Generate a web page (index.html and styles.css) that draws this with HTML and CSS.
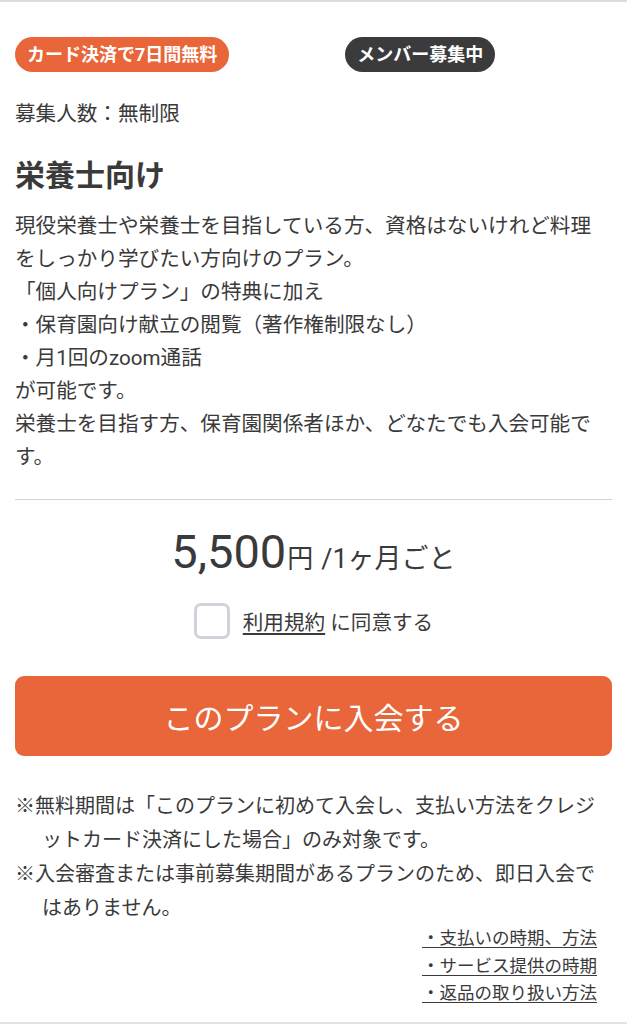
FILE: index.html
```html
<!DOCTYPE html>
<html lang="ja">
<head>
    <meta charset="UTF-8">
    <meta name="viewport" content="width=device-width, initial-scale=1.0">
    <title>栄養士向けプラン</title>
    <link rel="stylesheet" href="styles.css">
</head>
<body>

    <div class="plan">
        <div class="badges">
            <span class="badge badge-free">カード決済で7日間無料</span>
            <span class="badge badge-open">メンバー募集中</span>
        </div>

        <p class="limit">募集人数：無制限</p>

        <h2 class="plan-title">栄養士向け</h2>

        <p class="desc">現役栄養士や栄養士を目指している方、資格はないけれど料理をしっかり学びたい方向けのプラン。<br>「個人向けプラン」の特典に加え<br>・保育園向け献立の閲覧（著作権制限なし）<br>・月1回のzoom通話<br>が可能です。<br>栄養士を目指す方、保育園関係者ほか、どなたでも入会可能です。</p>

        <hr class="divider">

        <div class="price">
            <span class="amount">5,500</span><span class="yen">円</span><span class="per">/1ヶ月ごと</span>
        </div>

        <label class="agree">
            <input type="checkbox" class="check">
            <span class="box"></span>
            <span><a href="#" class="terms">利用規約</a> に同意する</span>
        </label>

        <button class="join-btn">このプランに入会する</button>

        <ul class="notes">
            <li>※無料期間は「このプランに初めて入会し、支払い方法をクレジットカード決済にした場合」のみ対象です。</li>
            <li>※入会審査または事前募集期間があるプランのため、即日入会ではありません。</li>
        </ul>

        <div class="links">
            <a href="#">・支払いの時期、方法</a>
            <a href="#">・サービス提供の時期</a>
            <a href="#">・返品の取り扱い方法</a>
        </div>
    </div>

</body>
</html>
```

FILE: styles.css
```css
html, body {
    margin: 0;
    background: #fff;
    font-family: Roboto, "Noto Sans CJK JP", sans-serif;
    color: #3a3a3a;
}

.plan {
    border-top: 2px solid #dcdce0;
    border-bottom: 2px solid #e4e4e8;
    padding: 35px 15px 0;
    height: 985px;
}

.badges {
    display: flex;
    gap: 116px;
}

.badge {
    display: inline-block;
    height: 35px;
    line-height: 35px;
    padding: 0 12px;
    border-radius: 18px;
    color: #fff;
    font-size: 18px;
    font-weight: bold;
}

.badge-free {
    background-color: #e8663a;
}

.badge-open {
    background-color: #3b3b3d;
}

.limit {
    margin: 29px 0 0;
    font-size: 20.6px;
    line-height: 27px;
}

.plan-title {
    margin: 28px 0 0;
    font-size: 30px;
    line-height: 40px;
    font-weight: bold;
}

.desc {
    margin: 14px 0 0;
    padding-right: 5px;
    font-size: 20.6px;
    line-height: 33px;
}

.divider {
    border: none;
    border-top: 1.5px solid #d4d4d8;
    margin: 25px 0 0;
}

.price {
    margin-top: 24px;
    text-align: center;
    line-height: 56px;
}

.amount {
    font-size: 47px;
}

.yen {
    font-size: 26px;
    margin: 0 8px 0 1px;
}

.per {
    font-size: 27px;
}

.agree {
    display: flex;
    justify-content: center;
    align-items: center;
    gap: 13px;
    margin-top: 12px;
    font-size: 20.6px;
    height: 36px;
}

.check {
    display: none;
}

.box {
    width: 30px;
    height: 30px;
    border: 3px solid #d2d2da;
    border-radius: 7px;
}

.terms {
    color: #3a3a3a;
    text-decoration: underline;
    text-underline-offset: 3px;
}

.join-btn {
    display: block;
    width: 100%;
    height: 80px;
    margin-top: 37px;
    border: none;
    border-radius: 9px;
    background-color: #e8663a;
    color: #fff;
    font-family: inherit;
    font-size: 30px;
    cursor: pointer;
}

.notes {
    list-style: none;
    margin: 33px 0 0;
    padding: 0;
    font-size: 20px;
    line-height: 34px;
}

.notes li {
    padding-left: 27px;
    text-indent: -27px;
}

.links {
    display: flex;
    flex-direction: column;
    align-items: flex-end;
    padding-right: 15px;
    font-size: 17.5px;
    line-height: 27.5px;
}

.links a {
    color: #3a3a3a;
    text-decoration: underline;
    text-underline-offset: 3px;
}
```
